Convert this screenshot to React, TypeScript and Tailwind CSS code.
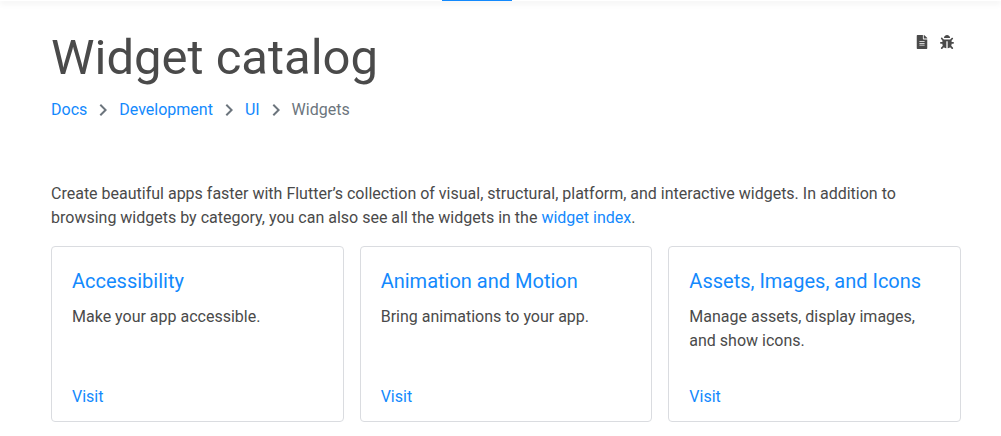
import React from "react";
import { FaFileAlt, FaBug } from "react-icons/fa";
import { MdChevronRight } from "react-icons/md";

const cards = [
  { title: "Accessibility", text: "Make your app accessible." },
  { title: "Animation and Motion", text: "Bring animations to your app." },
  { title: "Assets, Images, and Icons", text: "Manage assets, display images, and show icons." },
];
const crumbs = ["Docs", "Development", "UI"];

export default function App() {
  return (
    <div className="bg-white font-['Roboto',sans-serif] text-base leading-6 text-[#4a4a4a]">
      <header className="h-px bg-white shadow-[0_1px_6px_rgba(0,0,0,0.25)]">
        <div className="ml-[442px] h-px w-[70px] bg-[#1389fd]" />
      </header>
      <main className="px-10 pt-6 pl-[51px]">
        <div className="flex items-start justify-between">
          <h1 className="text-[49px] leading-[65px]">Widget catalog</h1>
          <div className="flex gap-[11px] pt-[10px] pr-[7px]">
            <a href="#source" aria-label="View page source"><FaFileAlt className="size-[14px]" /></a>
            <a href="#issue" aria-label="Report an issue"><FaBug className="size-[14px]" /></a>
          </div>
        </div>
        <nav aria-label="Breadcrumb" className="mt-2 flex items-center">
          {crumbs.map((c) => (
            <React.Fragment key={c}>
              <a href="#docs" className="text-[#1389fd]">{c}</a>
              <MdChevronRight className="mx-1 size-6 text-[#6c757d]" />
            </React.Fragment>
          ))}
          <span className="text-[#6c757d]">Widgets</span>
        </nav>
        <p className="mt-[60px]">
          Create beautiful apps faster with Flutter’s collection of visual, structural, platform, and interactive widgets. In addition to browsing widgets by category, you can also see all the widgets in the <a href="#index" className="text-[#1389fd]">widget index</a>.
        </p>
        <div className="mt-4 grid grid-cols-3 gap-4">
          {cards.map((c) => (
            <section key={c.title} className="flex min-h-44 flex-col rounded border border-[#dadce0] px-5 pt-5 pb-3">
              <h2 className="text-[20px] leading-7 text-[#1389fd]">{c.title}</h2>
              <p className="mt-[10px]">{c.text}</p>
              <a href="#visit" className="mt-auto text-[#1389fd]">Visit</a>
            </section>
          ))}
        </div>
      </main>
    </div>
  );
}
